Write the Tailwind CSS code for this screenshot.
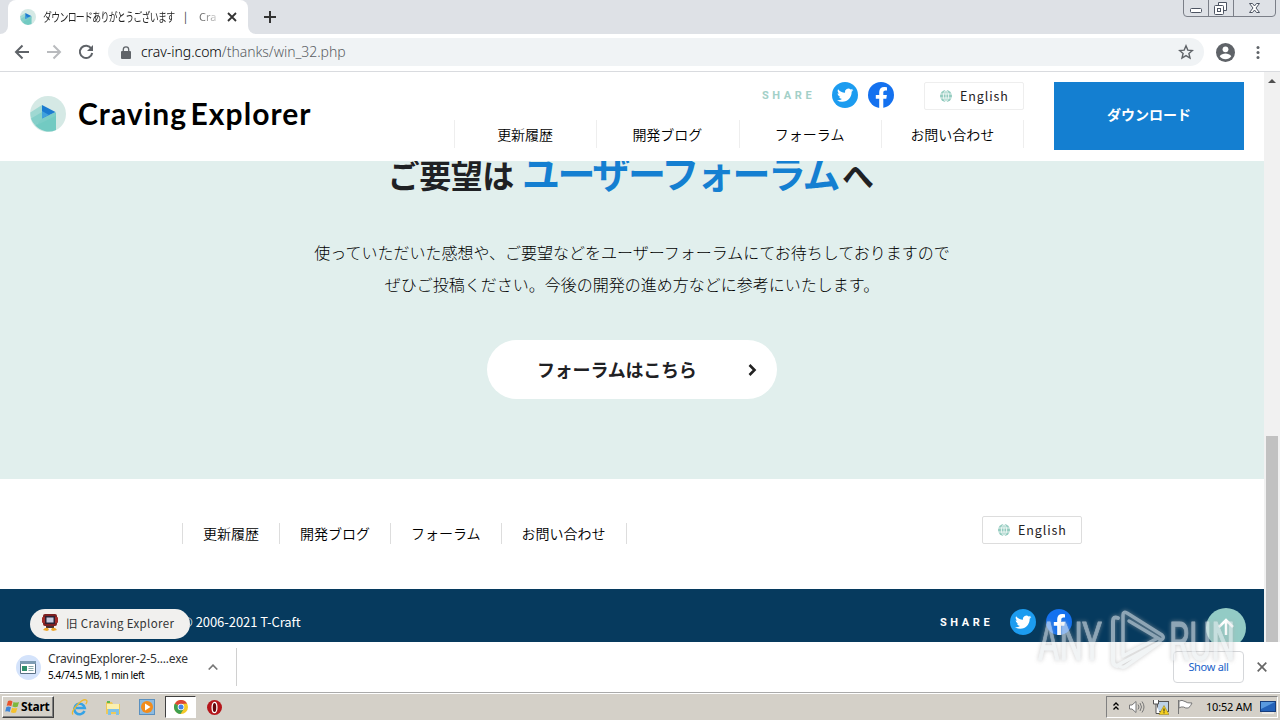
<!DOCTYPE html>
<html lang="ja">
<head>
    <meta charset="UTF-8">
    <meta name="viewport" content="width=device-width, initial-scale=1.0">
    <title>ダウンロードありがとうございます | Craving Explorer</title>
    <script src="https://cdn.jsdelivr.net/npm/@tailwindcss/browser@4"></script>
</head>
<body class="w-[1280px] h-[720px] overflow-hidden bg-white font-['Noto_Sans_CJK_JP',sans-serif] text-[#1f2124]">
    <!-- Shared icons -->
    <svg class="hidden">
        <symbol id="twitter" viewBox="0 0 26 26">
            <circle cx="13" cy="13" r="13" fill="#1c9cf0"/>
            <path transform="translate(5 5) scale(.68)" fill="#fff" d="M23.95 4.57a10 10 0 0 1-2.82.77 4.96 4.96 0 0 0 2.16-2.72c-.95.55-2 .95-3.13 1.18a4.92 4.92 0 0 0-8.38 4.48C7.69 8.1 4.07 6.13 1.64 3.16a4.82 4.82 0 0 0-.67 2.48c0 1.71.87 3.21 2.19 4.1a4.9 4.9 0 0 1-2.23-.62v.06a4.92 4.92 0 0 0 3.95 4.83 5 5 0 0 1-2.21.08 4.94 4.94 0 0 0 4.6 3.42A9.87 9.87 0 0 1 0 19.54a13.99 13.99 0 0 0 7.55 2.21c9.05 0 14-7.5 14-13.98 0-.21 0-.42-.02-.63a9.94 9.94 0 0 0 2.46-2.55z"/>
        </symbol>
        <symbol id="facebook" viewBox="0 0 26 26">
            <circle cx="13" cy="13" r="13" fill="#1471ef"/>
            <path fill="#fff" d="M11.2 26v-9.2H7.800V13h3.400v-2.900c0-3.300 2-5.100 5-5.100 1.400 0 2.800.25 2.800.25v3.200h-1.600c-1.600 0-2.100 1-2.100 2V13h3.600l-.6 3.800h-3V26z"/>
        </symbol>
        <symbol id="globe" viewBox="0 0 12 12">
            <circle cx="6" cy="6" r="6" fill="#93cbbf"/>
            <path d="M0 4h12M0 8h12M6 0v12M6 0C2.500 3 2.500 9 6 12M6 0c3.500 3 3.500 9 0 12" fill="none" stroke="#fff" stroke-width=".8"/>
        </symbol>
        <symbol id="logo" viewBox="0 0 36 36">
            <circle cx="18" cy="18" r="18" fill="#d5e9e5"/>
            <path d="M12 9 .3 16.500A18 18 0 0 0 5.500 29L12 24z" fill="#9fd8d2"/>
            <path d="M5 29 26 16.500V34A18 18 0 0 1 5 29z" fill="#72cac2"/>
            <path d="M1 22.500 12 16v9l-7 4a18 18 0 0 1-4-6.500z" fill="#84cfc9"/>
            <path d="M12 22.500 25.500 16v4L6 29.500z" fill="#7ccdc6"/>
            <path d="M12 9v13.500l13.500-6.500z" fill="#1b7bd0"/>
            <path d="M12 22.500V15l7 4z" fill="#3fa0dc"/>
        </symbol>
    </svg>

    <div class="flex flex-col w-full h-full">
        <!-- Tab strip -->
        <div class="flex h-[34px] shrink-0 bg-[#dee1e6]">
            <div class="w-2 bg-white"><div class="h-full rounded-br-lg bg-[#dee1e6]"></div></div>
            <div class="flex items-center w-[240px] h-full pl-3 rounded-t-lg bg-white">
                <svg class="w-4 h-4 shrink-0"><use href="#logo"/></svg>
                <span class="w-[132px] ml-[7px] mb-1 shrink-0"><span class="inline-block origin-left scale-x-[.74] whitespace-nowrap text-[12px] tracking-[-0.900px] text-[#222]">ダウンロードありがとうございます</span></span>
                <span class="flex justify-center w-[22px]"><span class="w-1 mb-px text-[11px] text-[#333]">|</span></span>
                <span class="w-[22px] pl-0.5 overflow-hidden whitespace-nowrap font-['Noto_Sans'] text-[11px] bg-linear-to-r from-[#555] to-[#ddd] bg-clip-text text-transparent">Cra</span>
                <svg class="w-[10px] h-[10px] ml-2" viewBox="0 0 10 10" stroke="#333" stroke-width="1.800"><path d="m1 1 8 8M9 1 1 9"/></svg>
            </div>
            <div class="w-2 bg-white"><div class="h-full rounded-bl-lg bg-[#dee1e6]"></div></div>
            <svg class="w-3 h-3 mt-[11px] ml-2" viewBox="0 0 12 12" stroke="#333" stroke-width="2"><path d="M6 0v12M0 6h12"/></svg>
            <svg class="w-[93px] h-[17px] ml-auto mr-[4px]" viewBox="0 0 93 17" fill="none" stroke="#7b7f88">
                <path d="M.5 0v13q0 3.500 3.500 3.500h85q3.500 0 3.500-3.500V0M25.500 0v16M50.500 0v16"/>
                <g stroke="#4d5462">
                    <rect x="7.500" y="8.500" width="11" height="4" rx="1" fill="#fff"/>
                    <path d="M35.500 5V2.500h8v8H41" fill="#fff"/>
                    <rect x="31.500" y="5.500" width="9" height="9" rx="1" fill="#fff"/>
                    <rect x="34.500" y="8.500" width="3" height="3"/>
                    <path d="M66.500 3.500h3l2 2.500 2-2.500h3l-3.500 4.500 3.500 4.500h-3l-2-2.500-2 2.500h-3l3.500-4.500z" fill="#fff"/>
                </g>
            </svg>
        </div>

        <!-- Toolbar -->
        <div class="flex items-center h-[38px] shrink-0 pl-[14px] pr-3 pb-px border-b border-[#d9dbdf] bg-white">
            <svg class="w-4 h-4" viewBox="0 0 16 16" fill="none" stroke="#5f6368" stroke-width="2"><path d="M15 8H2M8.500 1.500 2 8l6.500 6.500"/></svg>
            <svg class="w-4 h-4 ml-4" viewBox="0 0 16 16" fill="none" stroke="#b9bbbe" stroke-width="2"><path d="M1 8h13M7.500 1.500 14 8l-6.500 6.500"/></svg>
            <svg class="w-4 h-4 ml-4" viewBox="0 0 16 16" fill="none" stroke="#5f6368" stroke-width="2"><path d="M13.300 4.500A6.200 6.200 0 1 0 14.200 9"/><path d="M15 1v6H9z" fill="#5f6368" stroke="none"/></svg>
            <div class="flex items-center w-[1096px] h-7 ml-[14px] pl-[13px] pr-[10px] rounded-full bg-[#f0f3f5]">
                <svg class="w-[10px] h-[13px]" viewBox="0 0 10 13"><rect y="5" width="10" height="8" rx="1" fill="#5f6368"/><path d="M2.300 5V3.500a2.700 2.700 0 0 1 5.400 0V5" fill="none" stroke="#5f6368" stroke-width="1.300"/></svg>
                <span class="ml-[10px] mb-0.5 font-['Noto_Sans'] font-light text-[14px] tracking-[-0.040px] text-black">crav-ing.com<span class="text-[#5a5e63]">/thanks/win_32.php</span></span>
                <svg class="w-4 h-4 ml-auto" viewBox="0 0 16 16" fill="none" stroke="#5f6368" stroke-width="1.400"><path d="m8 1.800 1.800 4.300 4.600.4-3.500 3 1.100 4.500L8 11.600 4 14l1.100-4.500-3.500-3 4.600-.4z"/></svg>
            </div>
            <svg class="w-[19px] h-[19px] ml-3" viewBox="0 0 19 19"><circle cx="9.500" cy="9.500" r="9.500" fill="#5f6368"/><circle cx="9.500" cy="6.300" r="2.900" fill="#fff"/><path d="M3.700 13.200c1-2 3.800-2.800 5.800-2.800s4.800.8 5.800 2.800a7 7 0 0 1-11.600 0z" fill="#fff"/></svg>
            <svg class="w-1 h-[13px] ml-[21px]" viewBox="0 0 4 13" fill="#5f6368"><circle cx="2" cy="1.600" r="1.500"/><circle cx="2" cy="6.500" r="1.500"/><circle cx="2" cy="11.400" r="1.500"/></svg>
        </div>

        <!-- Viewport -->
        <div class="flex h-[570px] shrink-0">
            <div class="flex flex-col w-[1264px] overflow-hidden">
                <header class="relative z-10 flex h-[89px] shrink-0 pl-[30px] pr-5 pt-[10px] bg-white">
                    <div class="flex items-center h-16">
                        <svg class="w-9 h-9"><use href="#logo"/></svg>
                        <span class="w-[240px] ml-3 mb-0.5 whitespace-nowrap font-['Lato'] font-bold text-[30px] leading-none tracking-[1.050px] [word-spacing:-5px] text-black">Craving Explorer</span>
                    </div>
                    <div class="w-[570px] ml-auto">
                        <div class="flex items-center justify-end h-7">
                            <span class="w-[71px] pl-px font-['Roboto'] font-bold text-[11px] tracking-[3.600px] text-[#a3d0c8]">SHARE</span>
                            <svg class="w-[26px] h-[26px] mb-0.5"><use href="#twitter"/></svg>
                            <svg class="w-[26px] h-[26px] mb-0.5 ml-[10px]"><use href="#facebook"/></svg>
                            <a class="flex items-center w-[100px] h-7 ml-[30px] pl-[15px] border border-[#eee] rounded-xs">
                                <svg class="w-3 h-3 mr-2"><use href="#globe"/></svg><span class="text-[12.500px] tracking-[0.900px]">English</span>
                            </a>
                        </div>
                        <nav class="grid grid-cols-4 h-7 mt-[10px] border-l border-[#eee] text-center text-[14px] leading-7 font-[350] text-black">
                            <a class="pr-px border-r border-[#eee]">更新履歴</a>
                            <a class="pr-px border-r border-[#eee]">開発ブログ</a>
                            <a class="pr-px border-r border-[#eee]">フォーラム</a>
                            <a class="border-r border-[#eee]">お問い合わせ</a>
                        </nav>
                    </div>
                    <a class="flex items-center justify-center w-[190px] h-[68px] ml-[30px] pb-1 bg-[#147fd1] text-white font-bold text-[14px]">ダウンロード</a>
                </header>

                <main class="flex flex-col items-center h-[318px] shrink-0 bg-[#e1efed]">
                    <h2 class="flex items-baseline h-[60px] -mt-[19px] pr-0.5 leading-[60px] font-bold text-[32px] whitespace-nowrap">
                        <span class="tracking-[-0.500px]">ご要望は</span><span class="ml-2 text-[38px] tracking-[-2.400px] text-[#147fd1]">ユーザーフォーラム</span><span class="ml-1">へ</span>
                    </h2>
                    <p class="mt-[34px] text-center text-[16px] leading-8 font-light text-black">使っていただいた感想や、ご要望などをユーザーフォーラムにてお待ちしておりますので<br>ぜひご投稿ください。今後の開発の進め方などに参考にいたします。</p>
                    <a class="flex items-center w-[290px] h-[59px] mt-10 pl-[50px] pr-5 rounded-full bg-white font-bold text-[18px] tracking-[-0.200px]">
                        フォーラムはこちら
                        <svg class="w-[9px] h-3 ml-auto" viewBox="0 0 9 12" fill="none" stroke="#222" stroke-width="2.600"><path d="m1.500 1 5 5-5 5"/></svg>
                    </a>
                </main>

                <div class="flex justify-between h-[110px] shrink-0 pl-[182px] pr-[182px] bg-white">
                    <nav class="flex h-[21px] mt-11 border-l border-[#ddd] text-[14px] leading-[21px] font-[350] text-black">
                        <a class="px-5 border-r border-[#ddd]">更新履歴</a>
                        <a class="px-5 border-r border-[#ddd]">開発ブログ</a>
                        <a class="px-5 border-r border-[#ddd]">フォーラム</a>
                        <a class="px-5 border-r border-[#ddd]">お問い合わせ</a>
                    </nav>
                    <a class="flex items-center w-[100px] h-7 mt-[37px] pl-[15px] border border-[#ddd] rounded-xs">
                        <svg class="w-3 h-3 mr-2"><use href="#globe"/></svg><span class="text-[12.500px] tracking-[0.900px]">English</span>
                    </a>
                </div>

                <footer class="flex items-start h-[53px] shrink-0 pl-[30px] pr-[18px] bg-[#063a5e] text-white">
                    <a class="relative z-10 flex items-center w-40 h-[30px] mt-5 shrink-0 rounded-full bg-[#f1f0ee] pl-3 text-[#333]">
                        <svg class="w-4 h-[18px] mr-2 mb-0.5" viewBox="0 0 16 18"><rect x="1" y="0" width="14" height="12" rx="2" fill="#7c2022"/><rect x="0" y="3" width="16" height="6" rx="1" fill="#a22c29"/><rect x="3" y="2" width="10" height="8" rx="1" fill="#2b2135"/><rect x="4.500" y="3.500" width="7" height="5" fill="#c5cbe0"/><path d="M4 12h8v2H4z" fill="#463033"/><path d="M1 16q2-3 5-2l1 2-2 1zm14 0q-2-3-5-2l-1 2 2 1z" fill="#eda62b"/></svg>
                        <span class="text-[11.500px] tracking-[0.350px] whitespace-nowrap">旧 Craving Explorer</span>
                    </a>
                    <span class="-ml-2 mt-[22px] text-[13px] leading-[22px] tracking-[-0.050px] whitespace-nowrap">© 2006-2021 T-Craft</span>
                    <span class="w-[71px] ml-auto mt-[26px] pl-px font-['Roboto'] font-bold text-[11px] leading-4 tracking-[3.600px]">SHARE</span>
                    <svg class="w-[26px] h-[26px] mt-5"><use href="#twitter"/></svg>
                    <svg class="w-[26px] h-[26px] mt-5 ml-[10px]"><use href="#facebook"/></svg>
                    <div class="flex justify-center w-10 h-10 mt-[19px] ml-[134px] rounded-full bg-[#93cbc5]">
                        <svg class="w-[18px] h-[18px] mt-[10px]" viewBox="0 0 18 18" fill="none" stroke="#fff" stroke-width="2.500"><path d="M9 17V2M2 9l7-7 7 7"/></svg>
                    </div>
                </footer>
            </div>
            <!-- Scrollbar -->
            <div class="flex flex-col items-center justify-between w-4 pt-[7px] bg-[#f1f1f1]">
                <svg class="w-2 h-1" viewBox="0 0 8 4" fill="#505050"><path d="M0 4 4 0l4 4z"/></svg>
                <div class="w-3 h-[206px] bg-[#c1c1c1]"></div>
            </div>
        </div>

        <!-- Download shelf -->
        <div class="flex items-center h-[51px] shrink-0 pl-4 pr-[13px] border-b border-[#aaa] bg-white font-['Noto_Sans']">
            <svg class="w-[25px] h-[25px]" viewBox="0 0 25 25"><circle cx="12.500" cy="12.500" r="12.500" fill="#d4e3fb"/><path d="M4.500 6.500h15v12h-15z" fill="#fff" stroke="#5b7184"/><path d="M4 6h16v3H4z" fill="#7d9cb3"/><path d="M6 11h5v5H6z" fill="#2f8f6b"/><path d="M12.500 11.500h5M12.500 13.500h5M12.500 15.500h5" stroke="#8aa"/></svg>
            <div class="w-[152px] ml-[7px] whitespace-nowrap">
                <div class="text-[12px] leading-4 tracking-[-0.160px] text-[#333]">CravingExplorer-2-5....exe</div>
                <div class="text-[10px] leading-4 tracking-[-0.400px] text-black">5.4/74.5 MB, 1 min left</div>
            </div>
            <svg class="w-[10px] h-[6px] ml-2" viewBox="0 0 10 6" fill="none" stroke="#777" stroke-width="1.600"><path d="m.7 5.500 4.300-4.400 4.300 4.400"/></svg>
            <div class="w-px h-[38px] ml-[18px] bg-[#d0d0d0]"></div>
            <div class="flex items-center justify-center w-[71px] h-8 ml-auto border border-[#d5d7da] rounded text-[11px] tracking-[-0.300px] text-[#1a62c8]">Show all</div>
            <svg class="w-[10px] h-[10px] ml-[13px]" viewBox="0 0 10 10" stroke="#666" stroke-width="1.700"><path d="m.7.7 8.600 8.600M9.300.7.7 9.300"/></svg>
        </div>

        <!-- Taskbar -->
        <div class="flex items-center h-[27px] shrink-0 pl-0.5 pr-0.5 border-t border-white bg-[#d4d0c8] font-['Noto_Sans'] text-black">
            <div class="flex items-center w-[52px] h-[22px] pl-0.5 border border-t-white border-l-white border-r-[#404040] border-b-[#404040] shadow-[inset_-1px_-1px_0_#808080]">
                <svg class="w-[15px] h-[14px]" viewBox="0 0 15 14"><path d="M3 1q2.500-1 4.500.5L6.300 6.300q-2-1.300-4.600-.5z" fill="#e8532b"/><path d="M8.500 2q2.500 1 5.500 0l-1.400 4.800q-2.500 1-5.200-.2z" fill="#7db83c"/><path d="M1.400 6.900q2.500-.8 4.600.4L4.700 12q-2-1.300-4.500-.4z" fill="#3d86d8"/><path d="M7.100 7.700q2.600 1.200 5.200.2L11 12.500q-2.600 1-5.200-.2z" fill="#f5c12c"/></svg>
                <span class="ml-px text-[12px] font-bold tracking-[-0.200px]">Start</span>
            </div>
            <svg class="w-[17px] h-[17px] ml-[17px]" viewBox="0 0 17 17" fill="none"><path d="M13.500 12A5.300 5.300 0 1 1 13.800 9H5" stroke="#36a3e6" stroke-width="2.500"/><path d="M2 15.500C-1 12.500 11-1.500 15.500 1.200c1 1 .3 2.500-.7 4" stroke="#edb92e" stroke-width="1.300"/></svg>
            <svg class="w-[17px] h-[17px] ml-[17px]" viewBox="0 0 17 17"><path d="M1 3h6l1 2h7v10H1z" fill="#edc95b"/><path d="M2 5h12v5H2z" fill="#fbf0ae"/><path d="M2 2h3v2H2z" fill="#5fb650"/><path d="M3 16v-6h11v6h-3v-3H6v3z" fill="#7fc2e8"/></svg>
            <svg class="w-4 h-4 ml-[17px]" viewBox="0 0 16 16"><rect x=".5" y=".5" width="15" height="15" fill="#8dbbe0" stroke="#5a90bf"/><circle cx="8" cy="8" r="6" fill="#f28c1c"/><path d="M6 4.500v7l5.500-3.500z" fill="#fff"/></svg>
            <div class="flex items-center justify-center w-[31px] h-[22px] ml-[10px] border border-t-[#404040] border-l-[#404040] border-r-white border-b-white bg-white">
                <svg class="w-[14px] h-[14px]" viewBox="0 0 14 14"><circle cx="7" cy="7" r="7" fill="#f5c928"/><path d="M7 7 .9 3.500A7 7 0 0 0 6.500 14L10 8.500z" fill="#3f9f4f"/><path d="M.9 3.500A7 7 0 0 1 13.100 3.500L7 4v3z" fill="#dc4636"/><circle cx="7" cy="7" r="3.300" fill="#fff"/><circle cx="7" cy="7" r="2.500" fill="#4383e8"/></svg>
            </div>
            <svg class="w-[15px] h-[15px] ml-[11px]" viewBox="0 0 15 15"><circle cx="7.500" cy="7.500" r="7.500" fill="#b5161b"/><ellipse cx="7.500" cy="7.500" rx="2.400" ry="5.200" fill="#64070b" stroke="#fff" stroke-width="1.300"/></svg>
            <div class="flex items-center w-[172px] h-[22px] ml-auto pl-[6px] pr-px border border-t-[#808080] border-l-[#808080] border-r-white border-b-white">
                <svg class="w-[6px] h-2 mb-0.5" viewBox="0 0 6 8" fill="none" stroke="#000" stroke-width="1.300"><path d="m.5 3.500 2.500-2.500 2.500 2.500M.5 7.500 3 5l2.500 2.500"/></svg>
                <svg class="w-4 h-[14px] ml-[10px]" viewBox="0 0 16 14" fill="none" stroke="#777"><path d="M.5 5v4h2.500L7 12.500v-11L3 5z" fill="#fff"/><path d="M9 4.500q2 2.500 0 5M11 3q3 4 0 8M13 1.500q4 5.500 0 11"/></svg>
                <svg class="w-4 h-4 ml-2" viewBox="0 0 16 16"><rect x="4.500" y="2.500" width="11" height="10" fill="#bdd2e7" stroke="#555"/><path d="M.5 1v4h5V1M3 5v9.500h4" fill="#fff" stroke="#555"/><path d="m11 6.500 5 9H6z" fill="#f5cf20" stroke="#8f7a10" stroke-width=".5"/><path d="M11 9.500v3M11 13.300v1" stroke="#222"/></svg>
                <svg class="w-4 h-4 ml-2" viewBox="0 0 16 16" fill="#fff" stroke="#777"><path d="M1.500 15V1M2 2q3-1.500 6 .5 2 1.800 7 1.500-1 2.500-3.500 5-3 .5-5-1Q4 7.500 2 9z"/></svg>
                <span class="ml-[13px] text-[11px] tracking-[-0.200px] whitespace-nowrap">10:52 AM</span>
                <svg class="w-4 h-[14px] ml-auto" viewBox="0 0 16 14"><rect x=".5" y="1.500" width="15" height="10" fill="#2462b9" stroke="#173d7c"/><path d="M1 2h14L1 9z" fill="#5999df"/><path d="M2 13h12" stroke="#fff"/></svg>
            </div>
        </div>
    </div>

    <!-- Watermark -->
    <svg class="absolute left-[1034px] top-[604px] w-[206px] h-[72px] opacity-60 drop-shadow-[0_0_2px_#aaa]" viewBox="0 0 206 72" fill="none" stroke="#e9edf0" stroke-linejoin="round" stroke-linecap="round">
        <g fill="#e9edf0" stroke-width="1" font-family="Roboto" font-size="54">
            <text x="4" y="56" textLength="64" lengthAdjust="spacingAndGlyphs">ANY</text>
            <text x="135" y="56" textLength="66" lengthAdjust="spacingAndGlyphs">RUN</text>
        </g>
        <path d="M84 14q-5-2-5 3v40q0 4 4 5" stroke-width="4"/>
        <path d="M89 52V11q0-4 4-2l35 22q3 3-1 5l-32-19M89 52l33-17M126 38 92 62q-4 3-8-1l37-20" stroke-width="3.500"/>
    </svg>
</body>
</html>
